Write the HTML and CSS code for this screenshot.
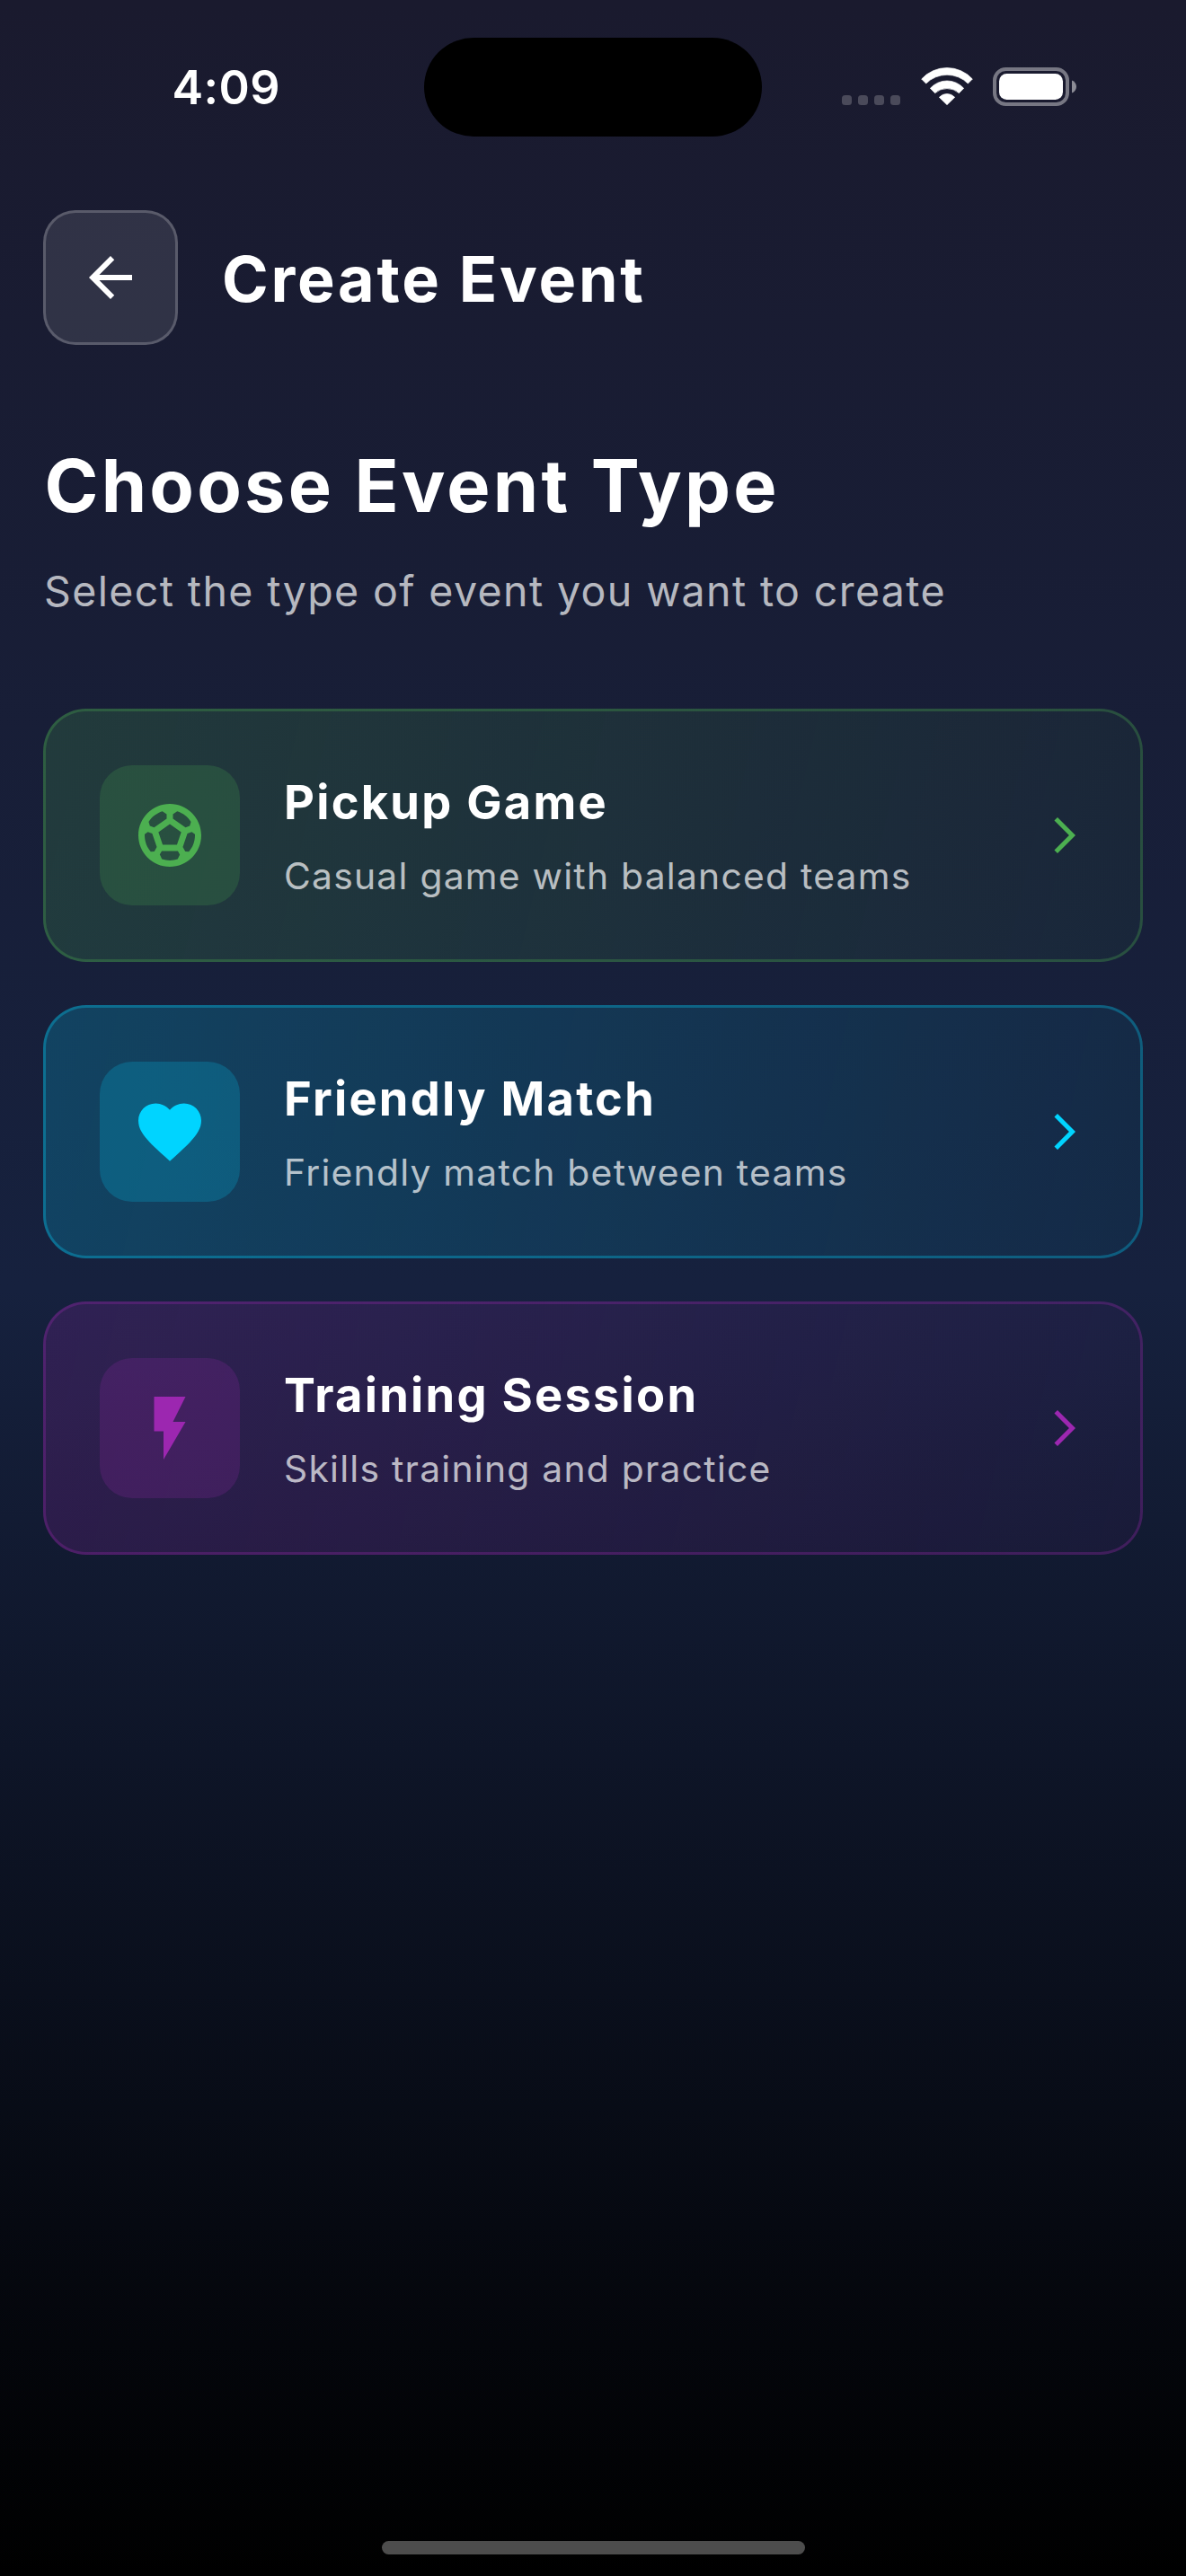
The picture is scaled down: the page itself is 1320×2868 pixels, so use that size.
FILE: index.html
```html
<!DOCTYPE html>
<html lang="en">
<head>
<meta charset="utf-8">
<title>Create Event</title>
<link rel="stylesheet" href="styles.css">
</head>
<body>
<div class="screen">
  <div class="status-bar">
    <time class="clock">4:09</time>
    <div class="island"></div>
    <div class="status-icons">
      <svg class="cellular" width="65" height="43" viewBox="0 0 65 43" fill="#4a4a5a">
        <rect x="0" y="31" width="11" height="11" rx="3.5"/>
        <rect x="18" y="31" width="11" height="11" rx="3.5"/>
        <rect x="36" y="31" width="11" height="11" rx="3.5"/>
        <rect x="54" y="31" width="11" height="11" rx="3.5"/>
      </svg>
      <svg class="wifi" width="58" height="43" viewBox="374 75 174 129" fill="#fff" stroke="#fff" stroke-width="2" stroke-linejoin="round">
        <path d="M376 114A115 115 0 0 1 546 114L531 129A99 99 0 0 0 391 129Z"/>
        <path d="M405 145A75 75 0 0 1 517 145L501 161A60 60 0 0 0 421 161Z"/>
        <path d="M435 175A35 35 0 0 1 487 175L461 200Z"/>
      </svg>
      <svg class="battery" width="94" height="43" viewBox="0 0 94 43">
        <rect x="2" y="2" width="81" height="39" rx="12.5" fill="none" stroke="#777783" stroke-width="4"/>
        <rect x="7" y="7" width="71" height="29" rx="8.5" fill="#fff"/>
        <path d="M88 14.5c3 1 5 4 5 7s-2 6-5 7z" fill="#8c8c96"/>
      </svg>
    </div>
  </div>

  <header class="header">
    <button class="back" aria-label="Back">
      <svg width="72" height="72" viewBox="0 0 24 24" fill="#fff"><path d="M20 11H7.83l5.59-5.59L12 4l-8 8 8 8 1.41-1.41L7.83 13H20v-2z"/></svg>
    </button>
    <div class="header-title">Create Event</div>
  </header>

  <main class="content">
    <h1 class="heading">Choose Event Type</h1>
    <p class="subheading">Select the type of event you want to create</p>

    <div class="cards">
      <a class="card card-pickup">
        <span class="tile">
          <svg width="84" height="84" viewBox="0 0 24 24"><path d="M12 2C6.48 2 2 6.48 2 12s4.48 10 10 10 10-4.48 10-10S17.52 2 12 2zm1 3.3l1.35-.95c1.82.56 3.37 1.76 4.38 3.34l-.39 1.34-1.35.46L13 6.7V5.3zm-3.35-.95L11 5.3v1.4L7.01 9.49l-1.35-.46-.39-1.34c1.01-1.57 2.56-2.77 4.38-3.34zM7.08 17.11l-1.14.1C4.73 15.81 4 13.99 4 12c0-.12.01-.23.02-.35l1-.73 1.38.48 1.46 4.34-.78 1.37zm7.42 2.48c-.79.26-1.63.41-2.5.41s-1.71-.15-2.5-.41l-.69-1.49.64-1.1h5.11l.64 1.11-.7 1.48zM14.27 15H9.73l-1.35-4.02L12 8.44l3.63 2.54L14.27 15zm3.79 2.21l-1.14-.1-.79-1.37 1.46-4.34 1.39-.47 1 .73c.01.11.02.22.02.34 0 1.99-.73 3.81-1.94 5.21z"/></svg>
        </span>
        <span class="text">
          <span class="title">Pickup Game</span>
          <span class="description">Casual game with balanced teams</span>
        </span>
        <svg class="chevron" width="48" height="48" viewBox="0 0 24 24"><path d="M6.23 20.23L8 22l10-10L8 2 6.23 3.77 14.46 12z"/></svg>
      </a>
      <a class="card card-friendly">
        <span class="tile">
          <svg width="84" height="84" viewBox="0 0 24 24"><path d="M12 21.35l-1.45-1.32C5.4 15.36 2 12.28 2 8.5 2 5.42 4.42 3 7.5 3c1.74 0 3.41.81 4.5 2.09C13.09 3.81 14.76 3 16.5 3 19.58 3 22 5.42 22 8.5c0 3.78-3.4 6.86-8.55 11.54L12 21.35z"/></svg>
        </span>
        <span class="text">
          <span class="title">Friendly Match</span>
          <span class="description">Friendly match between teams</span>
        </span>
        <svg class="chevron" width="48" height="48" viewBox="0 0 24 24"><path d="M6.23 20.23L8 22l10-10L8 2 6.23 3.77 14.46 12z"/></svg>
      </a>
      <a class="card card-training">
        <span class="tile">
          <svg width="84" height="84" viewBox="0 0 24 24"><path d="M7 2v11h3v9l7-12h-4l4-8z"/></svg>
        </span>
        <span class="text">
          <span class="title">Training Session</span>
          <span class="description">Skills training and practice</span>
        </span>
        <svg class="chevron" width="48" height="48" viewBox="0 0 24 24"><path d="M6.23 20.23L8 22l10-10L8 2 6.23 3.77 14.46 12z"/></svg>
      </a>
    </div>
  </main>

  <div class="home-indicator"></div>
</div>
</body>
</html>
```

FILE: styles.css
```css
* {
  box-sizing: border-box;
}

body {
  margin: 0;
  background: #000;
  color: #fff;
  font-family: Inter, "Liberation Sans", sans-serif;
}

.screen {
  display: flex;
  flex-direction: column;
  width: 1320px;
  height: 2868px;
  background: linear-gradient(to bottom, #1a1a2e 0%, #16213e 50%, #000 100%);
}

svg {
  display: block;
  flex: none;
}

/* Status bar */
.status-bar {
  display: grid;
  grid-template-columns: 472px 376px 472px;
  align-items: center;
  height: 194px;
}

.clock {
  padding: 2px 0 0 191.5px;
  font-size: 52px;
  line-height: 64px;
  font-weight: 600;
  letter-spacing: 0.4px;
}

.island {
  height: 110px;
  border-radius: 55px;
  background: #000;
}

.status-icons {
  display: flex;
  margin-bottom: 1px;
  padding-left: 89px;
}

.wifi {
  margin-left: 23px;
}

.battery {
  margin-left: 22px;
}

/* Header */
.header {
  display: flex;
  align-items: center;
  gap: 49px;
  margin-top: 40px;
  padding: 0 48px;
}

.back {
  display: flex;
  align-items: center;
  justify-content: center;
  width: 150px;
  height: 150px;
  padding: 0;
  border: 3px solid rgba(255, 255, 255, 0.2);
  border-radius: 36px;
  background: rgba(255, 255, 255, 0.1);
}

.header-title {
  padding-top: 3px;
  font-size: 70px;
  line-height: 86px;
  font-weight: 700;
  letter-spacing: 2.72px;
}

/* Content */
.content {
  padding: 107px 48px 0;
}

.heading {
  margin: 0;
  padding-left: 1.5px;
  font-size: 81px;
  line-height: 100px;
  font-weight: 700;
  letter-spacing: 3.23px;
}

.subheading {
  margin: 38px 0 102px;
  padding-left: 1px;
  font-size: 46.5px;
  line-height: 58px;
  letter-spacing: 1.38px;
  color: rgba(255, 255, 255, 0.7);
}

.cards {
  display: flex;
  flex-direction: column;
  gap: 48px;
}

.card {
  display: flex;
  align-items: center;
  height: 282px;
  padding: 0 60px;
  border: 3px solid rgb(var(--accent) / 0.3);
  border-radius: 48px;
  background: linear-gradient(102.97deg, rgb(var(--accent) / 0.2), rgb(var(--accent) / 0.05)) border-box;
}

.card-pickup {
  --accent: 76 175 80;
}

.card-friendly {
  --accent: 0 212 255;
}

.card-training {
  --accent: 156 39 176;
}

.tile {
  flex: none;
  padding: 36px;
  border-radius: 36px;
  background: rgb(var(--accent) / 0.2);
}

.tile svg,
.chevron {
  fill: rgb(var(--accent));
}

.text {
  display: flex;
  flex: 1;
  flex-direction: column;
  gap: 25px;
  margin-left: 49px;
  padding-top: 1px;
}

.title {
  font-size: 52.4px;
  line-height: 64px;
  font-weight: 700;
  letter-spacing: 2.25px;
}

.description {
  font-size: 40.8px;
  line-height: 50px;
  letter-spacing: 1.25px;
  color: rgba(255, 255, 255, 0.7);
}

/* Home indicator */
.home-indicator {
  width: 471px;
  height: 15px;
  margin: auto 0 24px 425px;
  border-radius: 7.5px;
  background: #4d4d4d;
}
```
